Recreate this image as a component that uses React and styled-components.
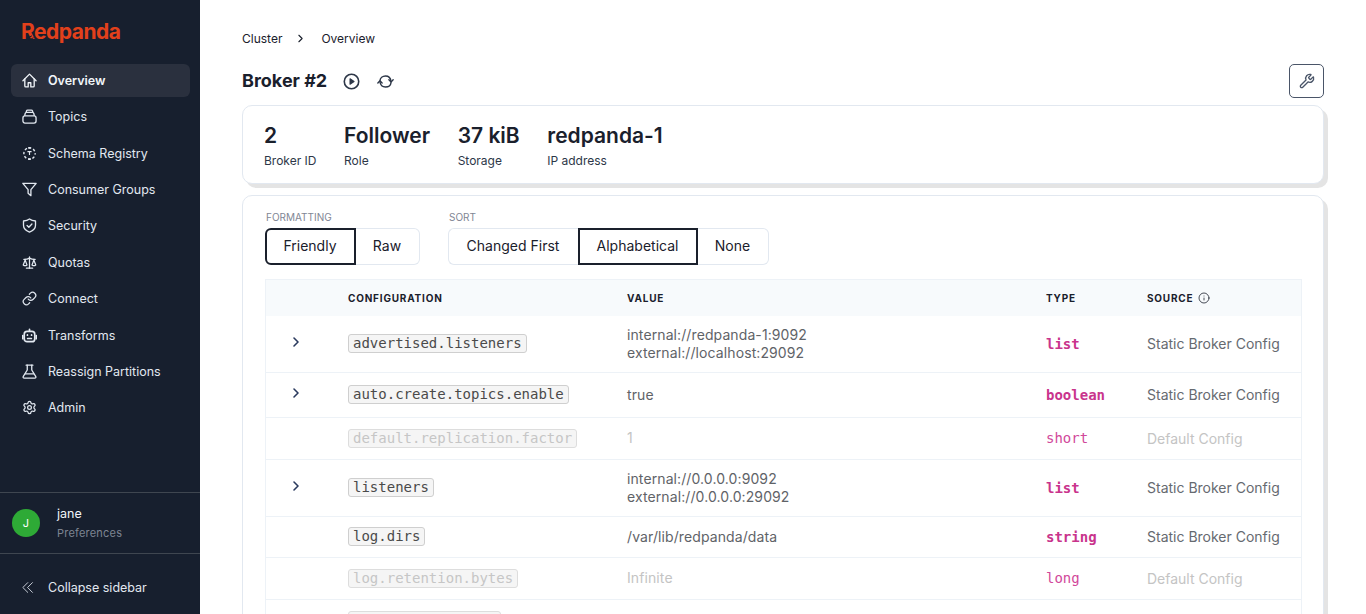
import styled, { createGlobalStyle } from "styled-components";
import { Scale, Link as LinkIcon, Settings, Wrench, Info, ChevronRight } from "lucide-react";

const GlobalStyle = createGlobalStyle`
  html, body {
    margin: 0;
    height: 100%;
    overflow: hidden;
    background: #fff;
    font-family: Inter, "Liberation Sans", sans-serif;
    color: #1a202c;
  }
  * { box-sizing: border-box; }
`;

// icons drawn by hand, the packages have nothing close enough
const HomeIcon = (props) => (
  <svg viewBox="0 0 16 16" fill="none" stroke="currentColor" strokeWidth="1.4" strokeLinecap="round" strokeLinejoin="round" {...props}>
    <path d="M1 8.2 8 1.2l7 7" />
    <path d="M3 6.4v7.4a1 1 0 0 0 1 1h2.6v-4.4h2.8v4.4H12a1 1 0 0 0 1-1V6.4" />
  </svg>
);

const TopicsIcon = (props) => (
  <svg viewBox="0 0 16 16" fill="none" stroke="currentColor" strokeWidth="1.4" {...props}>
    <rect x="1" y="7.4" width="14" height="7.6" rx="2.2" />
    <path d="M2.8 7.4 3.4 4.8C3.6 4 4 3.6 4.8 3.6h6.4c.8 0 1.2.4 1.4 1.2l.6 2.6" />
    <path d="M4.4 3.6 4.8 2c.2-.6.5-.9 1.2-.9h4c.7 0 1 .3 1.2.9l.4 1.6" />
  </svg>
);

const SchemaIcon = (props) => (
  <svg viewBox="0 0 16 16" fill="none" stroke="currentColor" strokeWidth="1.5" {...props}>
    <circle cx="8" cy="8" r="6" strokeDasharray="2.6 2.1" strokeDashoffset="1.3" />
    <path d="M5.8 6h4.400M8 6v3.600" strokeWidth="1.2" />
    <path d="M6.600 2h2.800M6.600 14h2.800" strokeWidth="1.800" />
  </svg>
);

const FunnelIcon = (props) => (
  <svg viewBox="0 0 16 16" fill="none" stroke="currentColor" strokeWidth="1.4" strokeLinejoin="round" {...props}>
    <path d="M.9 1.4h14.2L9.5 8.2v6.4L6.5 12V8.2z" />
  </svg>
);

const ShieldIcon = (props) => (
  <svg viewBox="0 0 16 16" fill="none" stroke="currentColor" strokeWidth="1.4" strokeLinecap="round" strokeLinejoin="round" {...props}>
    <path d="M8 1C6.2 2.5 4 3.1 1.6 3.2v4.6c0 3.3 2.6 5.800 6.400 7.200 3.800-1.400 6.400-3.900 6.400-7.200V3.200C12 3.100 9.800 2.500 8 1z" />
    <path d="M5.400 8l1.900 1.800 3.300-3.400" />
  </svg>
);

const RobotIcon = (props) => (
  <svg viewBox="0 0 16 16" fill="none" stroke="currentColor" strokeWidth="1.8" strokeLinecap="round" {...props}>
    <rect x="2.400" y="3.600" width="11.200" height="11" rx="3" />
    <path d="M8 1.400v2M.8 8v3.400M15.200 8v3.400" />
    <path d="M5.800 7.400v.3M10.200 7.400v.3M6 11.200h4" />
  </svg>
);

const FlaskIcon = (props) => (
  <svg viewBox="0 0 16 16" fill="none" stroke="currentColor" strokeWidth="1.4" strokeLinecap="round" strokeLinejoin="round" {...props}>
    <path d="M4.400 1.200h7.200" />
    <path d="M5.600 1.200v5.200L1.400 13.200c-.6 1 0 1.800 1 1.800h11.200c1 0 1.600-.8 1-1.800L10.400 6.400V1.200" />
    <path d="M3.600 10.600h8.800" />
  </svg>
);

const ChevronsIcon = (props) => (
  <svg viewBox="0 0 14 14" fill="none" stroke="currentColor" strokeWidth="1" {...props}>
    <path d="M7 1 1 7l6 6" />
    <path d="M12.500 1l-6 6 6 6" />
  </svg>
);

const PlayIcon = (props) => (
  <svg viewBox="0 0 16 16" fill="none" stroke="currentColor" strokeWidth="1.500" strokeLinejoin="round" {...props}>
    <circle cx="8" cy="8" r="6.800" />
    <path d="M6.600 5.400 10.400 8l-3.800 2.600z" fill="currentColor" strokeWidth="1" />
  </svg>
);

const SyncIcon = (props) => (
  <svg viewBox="0 0 16 16" fill="none" stroke="currentColor" strokeWidth="1.300" strokeLinecap="round" strokeLinejoin="round" {...props}>
    <path d="M2.800 7.200C3 4.700 5.200 2.800 8 2.800c2.600 0 4.800 1.900 5.200 5" />
    <path d="M11.200 6.400l2 2 2-2" />
    <path d="M13.200 9C12.900 11.400 10.800 13.200 8 13.200c-2.600 0-4.800-1.800-5.200-4.800" />
    <path d="M.8 9.400l2-2 2 2" />
  </svg>
);

const navItems = [
  { label: "Overview", icon: HomeIcon, active: true },
  { label: "Topics", icon: TopicsIcon },
  { label: "Schema Registry", icon: SchemaIcon },
  { label: "Consumer Groups", icon: FunnelIcon },
  { label: "Security", icon: ShieldIcon },
  { label: "Quotas", icon: Scale },
  { label: "Connect", icon: LinkIcon },
  { label: "Transforms", icon: RobotIcon },
  { label: "Reassign Partitions", icon: FlaskIcon },
  { label: "Admin", icon: Settings },
];

const stats = [
  { value: "2", label: "Broker ID" },
  { value: "Follower", label: "Role" },
  { value: "37 kiB", label: "Storage" },
  { value: "redpanda-1", label: "IP address" },
];

const rows = [
  { name: "advertised.listeners", value: ["internal://redpanda-1:9092", "external://localhost:29092"], type: "list", source: "Static Broker Config", expand: true, height: 57 },
  { name: "auto.create.topics.enable", value: ["true"], type: "boolean", source: "Static Broker Config", expand: true, height: 45 },
  { name: "default.replication.factor", value: ["1"], type: "short", source: "Default Config", muted: true, height: 42 },
  { name: "listeners", value: ["internal://0.0.0.0:9092", "external://0.0.0.0:29092"], type: "list", source: "Static Broker Config", expand: true, height: 57 },
  { name: "log.dirs", value: ["/var/lib/redpanda/data"], type: "string", source: "Static Broker Config", height: 41 },
  { name: "log.retention.bytes", value: ["Infinite"], type: "long", source: "Default Config", muted: true, height: 42 },
  { name: "log.segment.bytes", value: ["1 GiB"], type: "int", source: "Default Config", muted: true, height: 42 },
];

export default function App() {
  return (
    <>
      <GlobalStyle />
      <Page>
        <Sidebar>
          <Logo>
            Redpanda
            <LogoCut viewBox="0 0 8 6">
              <path d="M0 3.200 5 .8M1 5.400 6.500 2.800" />
            </LogoCut>
          </Logo>
          <Nav>
            {navItems.map(({ label, icon: Icon, active }) => (
              <NavItem key={label} $active={active}>
                <NavIcon as={Icon} />
                {label}
              </NavItem>
            ))}
          </Nav>
          <UserBox>
            <Avatar>J</Avatar>
            <UserText>
              <UserName>jane</UserName>
              <UserLink>Preferences</UserLink>
            </UserText>
          </UserBox>
          <Collapse>
            <CollapseIcon as={ChevronsIcon} />
            Collapse sidebar
          </Collapse>
        </Sidebar>

        <Main>
          <Breadcrumb>
            <span>Cluster</span>
            <CrumbArrow />
            <span>Overview</span>
          </Breadcrumb>

          <TitleRow>
            <Title>Broker #2</Title>
            <TitleIcon as={PlayIcon} />
            <TitleIcon as={SyncIcon} />
            <ToolButton aria-label="Tools">
              <Wrench size={16} strokeWidth={2} />
            </ToolButton>
          </TitleRow>

          <StatsCard>
            {stats.map((s) => (
              <Stat key={s.label}>
                <StatValue>{s.value}</StatValue>
                <StatLabel>{s.label}</StatLabel>
              </Stat>
            ))}
          </StatsCard>

          <ConfigCard>
            <Controls>
              <ControlGroup>
                <ControlLabel>Formatting</ControlLabel>
                <Segments>
                  <Segment $selected $width={91}>Friendly</Segment>
                  <Segment $width={64}>Raw</Segment>
                </Segments>
              </ControlGroup>
              <ControlGroup>
                <ControlLabel>Sort</ControlLabel>
                <Segments>
                  <Segment $width={130}>Changed First</Segment>
                  <Segment $selected $width={120}>Alphabetical</Segment>
                  <Segment $width={71}>None</Segment>
                </Segments>
              </ControlGroup>
            </Controls>

            <Table>
              <HeaderRow>
                <span />
                <HeaderCell>Configuration</HeaderCell>
                <HeaderCell>Value</HeaderCell>
                <HeaderCell>Type</HeaderCell>
                <HeaderCell>
                  Source <Info size={12} strokeWidth={1.6} />
                </HeaderCell>
              </HeaderRow>
              {rows.map((r) => (
                <Row key={r.name} $height={r.height}>
                  <ExpandCell>{r.expand && <ChevronRight size={16} strokeWidth={2.4} />}</ExpandCell>
                  <NameCell>
                    <ConfigName $muted={r.muted}>{r.name}</ConfigName>
                  </NameCell>
                  <ValueCell $muted={r.muted}>
                    {r.value.map((v) => (
                      <div key={v}>{v}</div>
                    ))}
                  </ValueCell>
                  <TypeCell $muted={r.muted}>{r.type}</TypeCell>
                  <SourceCell $muted={r.muted}>{r.source}</SourceCell>
                </Row>
              ))}
            </Table>
          </ConfigCard>
        </Main>
      </Page>
    </>
  );
}

const Page = styled.div`
  display: flex;
  height: 100vh;
  overflow: hidden;
`;

const Sidebar = styled.aside`
  flex: 0 0 200px;
  display: flex;
  flex-direction: column;
  background: #171f2e;
  color: #e2e8f0;
`;

const Logo = styled.div`
  position: relative;
  height: 64px;
  padding: 18px 0 0 21px;
  font-size: 21px;
  line-height: 28px;
  font-weight: 700;
  letter-spacing: -0.5px;
  color: #e2401b;
`;

const LogoCut = styled.svg`
  position: absolute;
  left: 27px;
  top: 35px;
  width: 8px;
  height: 6px;
  fill: none;
  stroke: #171f2e;
  stroke-width: 1;
`;

const Nav = styled.nav`
  flex: 1;
  display: flex;
  flex-direction: column;
  gap: 3.4px;
  padding: 0.3px 10px 0 11px;
`;

const NavItem = styled.div`
  display: flex;
  align-items: center;
  gap: 11px;
  height: 33px;
  padding: 0 0 1px 11px;
  border-radius: 6px;
  font-size: 12.5px;
  font-weight: ${({ $active }) => ($active ? 600 : 400)};
  color: ${({ $active }) => ($active ? "#f1f5f9" : "#e2e8f0")};
  background: ${({ $active }) => ($active ? "#2a303e" : "transparent")};
`;

const NavIcon = styled.svg`
  width: 15px;
  height: 15px;
  flex: none;
`;

const UserBox = styled.div`
  display: flex;
  align-items: center;
  gap: 17px;
  height: 62px;
  padding-left: 12px;
  border-top: 1px solid #3f4650;
  border-bottom: 1px solid #3f4650;
`;

const Avatar = styled.div`
  display: flex;
  align-items: center;
  justify-content: center;
  width: 28px;
  height: 28px;
  border-radius: 50%;
  background: #2eaa36;
  color: #fff;
  font-size: 11px;
  font-weight: 400;
`;

const UserText = styled.div`
  display: flex;
  flex-direction: column;
  gap: 5px;
`;

const UserName = styled.div`
  font-size: 12.5px;
  line-height: 15px;
  font-weight: 400;
  color: #f1f5f9;
`;

const UserLink = styled.div`
  font-size: 11px;
  line-height: 14px;
  letter-spacing: 0.2px;
  color: #7d8492;
`;

const Collapse = styled.div`
  display: flex;
  align-items: center;
  gap: 14px;
  height: 60px;
  padding: 6px 0 0 22px;
  font-size: 12.5px;
`;

const CollapseIcon = styled.svg`
  width: 12px;
  height: 13px;
  flex: none;
`;

const Main = styled.main`
  flex: 1;
  min-width: 0;
  padding: 31px 42px 0;
`;

const Breadcrumb = styled.div`
  display: flex;
  align-items: center;
  height: 15px;
  font-size: 12px;
  color: #1a202c;
`;

const CrumbArrow = styled(ChevronRight).attrs({ size: 13, strokeWidth: 2 })`
  margin: 0 14px 0 12px;
`;

const TitleRow = styled.div`
  display: flex;
  align-items: center;
  margin-top: 18px;
  height: 34px;
`;

const Title = styled.h1`
  margin: 0 16px 1px 0;
  font-size: 18px;
  font-weight: 700;
  color: #1a202c;
`;

const TitleIcon = styled.svg`
  width: 17px;
  height: 17px;
  margin-right: 17px;
  color: #2d3748;
`;

const ToolButton = styled.button`
  display: flex;
  align-items: center;
  justify-content: center;
  width: 35px;
  height: 34px;
  margin-left: auto;
  padding: 0;
  background: #fff;
  border: 1px solid #4a5568;
  border-radius: 5px;
  color: #4a5568;
`;

const Card = styled.section`
  background: #fff;
  border: 1px solid #e2e8f0;
  border-radius: 10px;
  box-shadow: 4px 4px 0 #e4e4e4;
`;

const StatsCard = styled(Card)`
  display: flex;
  height: 79px;
  margin-top: 7px;
  padding: 18px 21px;
`;

const Stat = styled.div`
  margin-right: 27.6px;
`;

const StatValue = styled.div`
  font-size: 21px;
  line-height: 24px;
  font-weight: 600;
  color: #1a202c;
`;

const StatLabel = styled.div`
  margin-top: 6px;
  font-size: 12px;
  line-height: 14px;
  color: #2d3748;
`;

const ConfigCard = styled(Card)`
  margin-top: 11px;
  height: 600px;
  padding: 15px 21px 0 22px;
`;

const Controls = styled.div`
  display: flex;
  gap: 28px;
`;

const ControlGroup = styled.div`
  display: flex;
  flex-direction: column;
`;

const ControlLabel = styled.div`
  margin: 0 0 5px 1px;
  font-size: 10px;
  line-height: 12px;
  text-transform: uppercase;
  color: #7f8694;
`;

const Segments = styled.div`
  display: flex;
  height: 37px;
`;

const Segment = styled.button`
  width: ${({ $width }) => $width}px;
  height: 37px;
  padding: 0 1px 2px 0;
  background: #fff;
  border: 1px solid #e2e8f0;
  border-left: none;
  border-right: none;
  font-family: inherit;
  font-size: 14px;
  color: #1a202c;

  &:first-child {
    border-left: 1px solid #e2e8f0;
    border-radius: 6px 0 0 6px;
  }

  &:last-child {
    border-right: 1px solid #e2e8f0;
    border-radius: 0 6px 6px 0;
  }

  ${({ $selected }) => $selected && "&&& { border: 2px solid #1a202c; }"}
`;

const Table = styled.div`
  margin-top: 14px;
  border-left: 1px solid #edf2f7;
  border-right: 1px solid #edf2f7;
  border-top: 1px solid #edf2f7;
`;

const columns = "82px 279px 419px 101px 1fr";

const HeaderRow = styled.div`
  display: grid;
  grid-template-columns: ${columns};
  align-items: center;
  height: 35.5px;
  background: #f7fafc;
`;

const HeaderCell = styled.div`
  display: flex;
  align-items: center;
  gap: 5px;
  font-size: 10px;
  font-weight: 700;
  letter-spacing: 0.8px;
  text-transform: uppercase;
  color: #1a202c;
`;

const Row = styled.div`
  display: grid;
  grid-template-columns: ${columns};
  align-items: center;
  height: ${({ $height }) => $height}px;
  border-bottom: 1px solid #edf2f7;
`;

const ExpandCell = styled.div`
  display: flex;
  padding: 0 0 3px 22px;
  color: #2a3a5e;
`;

const NameCell = styled.div`
  display: flex;
`;

const ConfigName = styled.code`
  padding: 0 4px;
  background: #f5f5f5;
  border: 1px solid ${({ $muted }) => ($muted ? "#dddddd" : "#cfcfcf")};
  border-radius: 3px;
  font-family: "DejaVu Sans Mono", monospace;
  font-size: 14px;
  line-height: 17px;
  color: ${({ $muted }) => ($muted ? "#c6c6c6" : "#4a4a4a")};
`;

const ValueCell = styled.div`
  font-size: 14px;
  line-height: 17.5px;
  letter-spacing: 0.1px;
  color: ${({ $muted }) => ($muted ? "#c4c4c4" : "#5f6368")};
`;

const TypeCell = styled.div`
  font-family: "DejaVu Sans Mono", monospace;
  font-size: 14px;
  font-weight: ${({ $muted }) => ($muted ? 400 : 700)};
  color: ${({ $muted }) => ($muted ? "#d1489a" : "#c9348c")};
`;

const SourceCell = styled.div`
  font-size: 14px;
  color: ${({ $muted }) => ($muted ? "#c4c4c4" : "#666a70")};
`;
